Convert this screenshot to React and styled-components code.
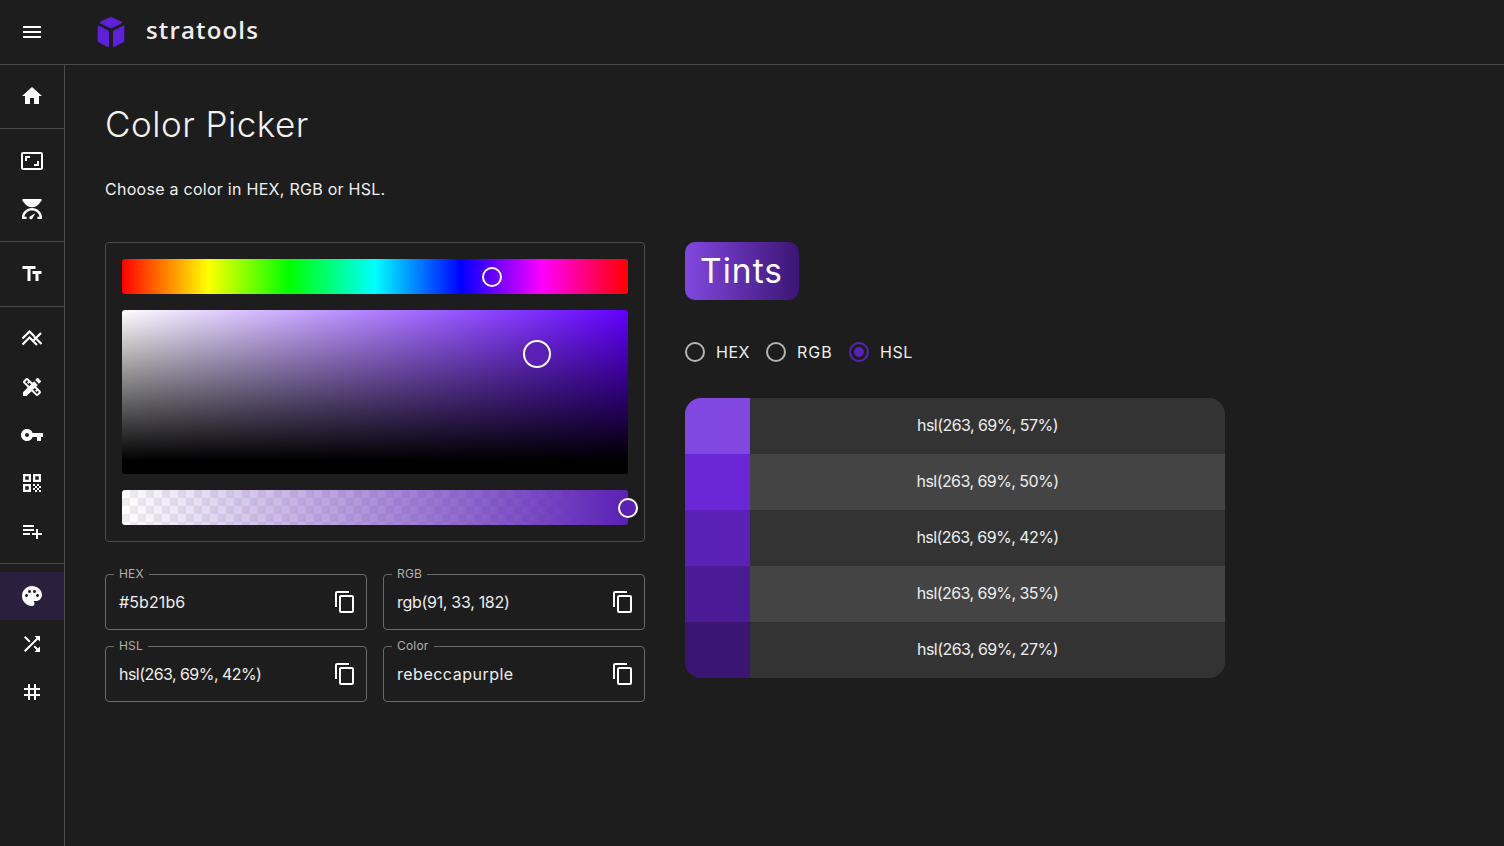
import React from "react";
import styled, { createGlobalStyle } from "styled-components";
import {
  MdMenu, MdHome, MdAspectRatio, MdTextFields, MdDesignServices, MdVpnKey,
  MdPlaylistAdd, MdPalette, MdShuffle, MdTag, MdContentCopy,
} from "react-icons/md";

const Global = createGlobalStyle`
  html, body { margin: 0; padding: 0; background: #1d1d1d; }
  body { font-family: Inter, "Open Sans", "Liberation Sans", sans-serif; color: #fff; overflow: hidden; }
`;

const Page = styled.div`
  width: 1504px; height: 846px; display: flex; flex-direction: column; background: #1d1d1d;
`;
const TopBar = styled.header`
  height: 64px; flex: none; display: flex; align-items: center; border-bottom: 1px solid #4a4a4a;
`;
const MenuCell = styled.div`
  width: 64px; flex: none; display: flex; justify-content: center; align-items: center;
  font-size: 24px; color: #fff;
`;
const Logo = styled.svg`
  width: 36px; height: 36px; margin-left: 29px; margin-top: -1px; flex: none;
`;
const Brand = styled.div`
  margin-left: 17px; margin-bottom: 5px; font-family: "Open Sans", sans-serif; font-weight: 600; font-size: 24px;
  letter-spacing: 1.15px; color: #eee;
`;
const Body = styled.div`
  flex: 1; display: flex; min-height: 0;
`;
const Side = styled.nav`
  width: 64px; flex: none; border-right: 1px solid #4a4a4a; padding-top: 7px;
`;
const Group = styled.div`
  display: flex; flex-direction: column; padding-bottom: 8px; margin-bottom: 8px;
  border-bottom: ${(p) => (p.$last ? "none" : "1px solid #4a4a4a")};
`;
const NavItem = styled.div`
  height: 48px; display: flex; align-items: center; justify-content: center; font-size: 24px; color: #fff;
  background: ${(p) => (p.$active ? "#2a1f3d" : "transparent")};
`;
const Main = styled.main`
  flex: 1; padding: 31px 40px 0; min-width: 0;
`;
const Title = styled.h1`
  margin: 0; font-weight: 300; font-size: 35px; line-height: 56px; letter-spacing: 0.5px; color: #f2f2f2;
`;
const Lead = styled.p`
  margin: 24px 0 0; font-size: 16px; line-height: 26px; letter-spacing: 0.27px; color: #f0f0f0;
`;
const Columns = styled.div`
  display: flex; gap: 40px; margin-top: 40px; align-items: flex-start;
`;
const Left = styled.div`
  width: 540px; flex: none; display: flex; flex-direction: column;
`;
const PickerCard = styled.div`
  border: 1px solid #4a4a4a; border-radius: 4px; padding: 16px; display: flex; flex-direction: column; gap: 16px;
`;
const Track = styled.div`
  position: relative; height: 35px; border-radius: 3px;
`;
const HueTrack = styled(Track)`
  background: linear-gradient(to right, #f00 0%, #ff0 17%, #0f0 33%, #0ff 50%, #00f 67%, #f0f 83%, #f00 100%);
`;
const AlphaTrack = styled(Track)`
  background:
    linear-gradient(to right, rgba(91,33,182,0), #5b21b6),
    repeating-conic-gradient(#eeeeee 0% 25%, #ffffff 0% 50%) 0 0 / 16px 16px;
`;
const Area = styled.div`
  position: relative; height: 164px; border-radius: 3px;
  background:
    linear-gradient(to top, #000 0%, #000 8%, rgba(0,0,0,0) 100%),
    linear-gradient(to right, #fff, #6200ff);
`;
const Thumb = styled.span`
  position: absolute; box-sizing: border-box; width: ${(p) => p.$size}px; height: ${(p) => p.$size}px;
  left: ${(p) => p.$x}px; top: ${(p) => p.$y}px; border: 2px solid #fff; border-radius: 50%;
  background: ${(p) => p.$bg};
`;
const Fields = styled.div`
  display: grid; grid-template-columns: 262px 262px; gap: 16px; margin-top: 32px;
`;
const Field = styled.fieldset`
  margin: 0; padding: 0 9px 0 13px; height: 63px; box-sizing: border-box; min-width: 0;
  border: 1px solid #6a6a6a; border-radius: 4px; display: flex; align-items: center; justify-content: space-between;
  position: relative; margin-top: -7px;
`;
const Legend = styled.legend`
  font-size: 12px; line-height: 14px; padding: 0 5px; margin-left: -5px; color: #b0b0b0; letter-spacing: 0.2px;
`;
const Value = styled.span`
  font-size: 16px; letter-spacing: ${(p) => p.$track}px; color: #eee; position: relative; top: -3px;
`;
const CopyBtn = styled.span`
  font-size: 24px; display: flex; color: #fff; position: relative; top: -3px;
`;
const Right = styled.div`
  width: 540px; flex: none;
`;
const TintsTitle = styled.div`
  display: inline-block; height: 58px; line-height: 58px; padding: 0 16px 0 15px; border-radius: 10px; font-size: 33.5px;
  letter-spacing: 1.05px; color: #fff;
  background: linear-gradient(to right, #8247e0, #3b1574);
`;
const Radios = styled.div`
  display: flex; margin-top: 31px; height: 42px; align-items: center;
`;
const RadioItem = styled.label`
  display: flex; align-items: center; margin-right: 16px; font-size: 16px; letter-spacing: ${(p) => p.$track}px; color: #eee;
`;
const RadioDot = styled.span`
  box-sizing: border-box; width: 20px; height: 20px; border-radius: 50%; margin-right: 11px; position: relative;
  border: 2px solid ${(p) => (p.$on ? "#5b21b6" : "#b4b4b4")};
  &::after {
    content: ""; display: ${(p) => (p.$on ? "block" : "none")}; position: absolute; inset: 3px; border-radius: 50%; background: #5b21b6;
  }
`;
const Table = styled.div`
  margin-top: 25px; border-radius: 16px; overflow: hidden;
`;
const Row = styled.div`
  display: flex; height: 56px; background: ${(p) => (p.$alt ? "#444444" : "#333333")};
`;
const Swatch = styled.div`
  width: 65px; flex: none; background: ${(p) => p.$c};
`;
const RowText = styled.div`
  flex: 1; display: flex; align-items: center; justify-content: center; padding-bottom: 2px; font-size: 16px;
  letter-spacing: -0.56px; color: #eee;
`;

const Gauge = () => (
  <svg width="24" height="24" viewBox="0 0 24 24" fill="#fff">
    <path d="M2.5 2h19v1.8L18.4 7.6C17 9.2 14.8 10.2 12 10.2s-5-1-6.4-2.6L2.5 3.8z" />
    <path d="M12 11c5.4 0 9.8 4.1 10 9.2V22h-4.6v-2.2h2.2C19 16 15.8 13.4 12 13.4S5 16 4.4 19.8h2.2V22H2v-1.8C2.200 15.100 6.600 11 12 11z" />
    <path d="M9.700 21.800c-.6-.7-.5-1.700.2-2.300l5.400-3.300-3.100 5.500c-.5.800-1.800.900-2.500.100z" />
  </svg>
);
const Peaks = () => (
  <svg width="24" height="24" viewBox="0 0 24 24" fill="none" stroke="#fff" strokeWidth="2.200">
    <path d="M2.500 11.500 9.500 4.500l4.800 4.800" />
    <path d="M2.500 17.500 9.500 10.500l7.500 7.500" />
    <path d="M13.500 13.500l7.500-7.500M14 9.500l7.500 7.500" />
  </svg>
);
const Qr = () => (
  <svg width="24" height="24" viewBox="0 0 24 24" fill="#fff">
    <path fillRule="evenodd" d="M3 3h8v8H3zM5.200 5.200v3.600h3.600V5.200zM13 3h8v8h-8zM15.200 5.200v3.600h3.600V5.200zM3 13h8v8H3zM5.200 15.200v3.600h3.600v-3.600z" />
    <path d="M13 13h2v2h-2zM17 13h2v2h-2zM15 15h2v2h-2zM19 15h2v2h-2zM13 17h2v2h-2zM17 17h2v2h-2zM15 19h2v2h-2zM19 19h2v2h-2z" />
  </svg>
);

const tints = [
  ["#8247e0", "hsl(263, 69%, 57%)"],
  ["#6a27d6", "hsl(263, 69%, 50%)"],
  ["#5b21b6", "hsl(263, 69%, 42%)"],
  ["#4a1b95", "hsl(263, 69%, 35%)"],
  ["#3a1573", "hsl(263, 69%, 27%)"],
];
const fields = [
  ["HEX", "#5b21b6", 0.1],
  ["RGB", "rgb(91, 33, 182)", -0.3],
  ["HSL", "hsl(263, 69%, 42%)", -0.55],
  ["Color", "rebeccapurple", 0.5],
];

export default function App() {
  return (
    <Page>
      <Global />
      <TopBar>
        <MenuCell><MdMenu /></MenuCell>
        <Logo viewBox="0 0 36 36">
          <g fill="#5f20da" stroke="#5f20da" strokeWidth="2" strokeLinejoin="round">
            <path d="M18 4l10 4.500-10 4.800-10-4.800z" />
            <path d="M5.700 12.500l9.300 5.200v14.300l-9.300-5z" />
            <path d="M30.300 12.500l-9.300 5.200v14.300l9.300-5z" />
          </g>
        </Logo>
        <Brand>stratools</Brand>
      </TopBar>
      <Body>
        <Side>
          <Group><NavItem><MdHome /></NavItem></Group>
          <Group>
            <NavItem><MdAspectRatio /></NavItem>
            <NavItem><Gauge /></NavItem>
          </Group>
          <Group><NavItem><MdTextFields /></NavItem></Group>
          <Group>
            <NavItem><Peaks /></NavItem>
            <NavItem><MdDesignServices /></NavItem>
            <NavItem><MdVpnKey /></NavItem>
            <NavItem><Qr /></NavItem>
            <NavItem><MdPlaylistAdd /></NavItem>
          </Group>
          <Group $last>
            <NavItem $active><MdPalette /></NavItem>
            <NavItem><MdShuffle /></NavItem>
            <NavItem><MdTag /></NavItem>
          </Group>
        </Side>
        <Main>
          <Title>Color Picker</Title>
          <Lead>Choose a color in HEX, RGB or HSL.</Lead>
          <Columns>
            <Left>
              <PickerCard>
                <HueTrack><Thumb $size={20} $x={360} $y={8} $bg="transparent" /></HueTrack>
                <Area><Thumb $size={28} $x={401} $y={30} $bg="#5b21b6" /></Area>
                <AlphaTrack><Thumb $size={20} $x={496} $y={8} $bg="#5b21b6" /></AlphaTrack>
              </PickerCard>
              <Fields>
                {fields.map(([label, value, track]) => (
                  <Field key={label}>
                    <Legend>{label}</Legend>
                    <Value $track={track}>{value}</Value>
                    <CopyBtn><MdContentCopy /></CopyBtn>
                  </Field>
                ))}
              </Fields>
            </Left>
            <Right>
              <TintsTitle>Tints</TintsTitle>
              <Radios>
                <RadioItem $track={0.5}><RadioDot />HEX</RadioItem>
                <RadioItem $track={1.1}><RadioDot />RGB</RadioItem>
                <RadioItem $track={0.6}><RadioDot $on />HSL</RadioItem>
              </Radios>
              <Table>
                {tints.map(([c, text], i) => (
                  <Row key={text} $alt={i % 2 === 1}>
                    <Swatch $c={c} />
                    <RowText>{text}</RowText>
                  </Row>
                ))}
              </Table>
            </Right>
          </Columns>
        </Main>
      </Body>
    </Page>
  );
}
